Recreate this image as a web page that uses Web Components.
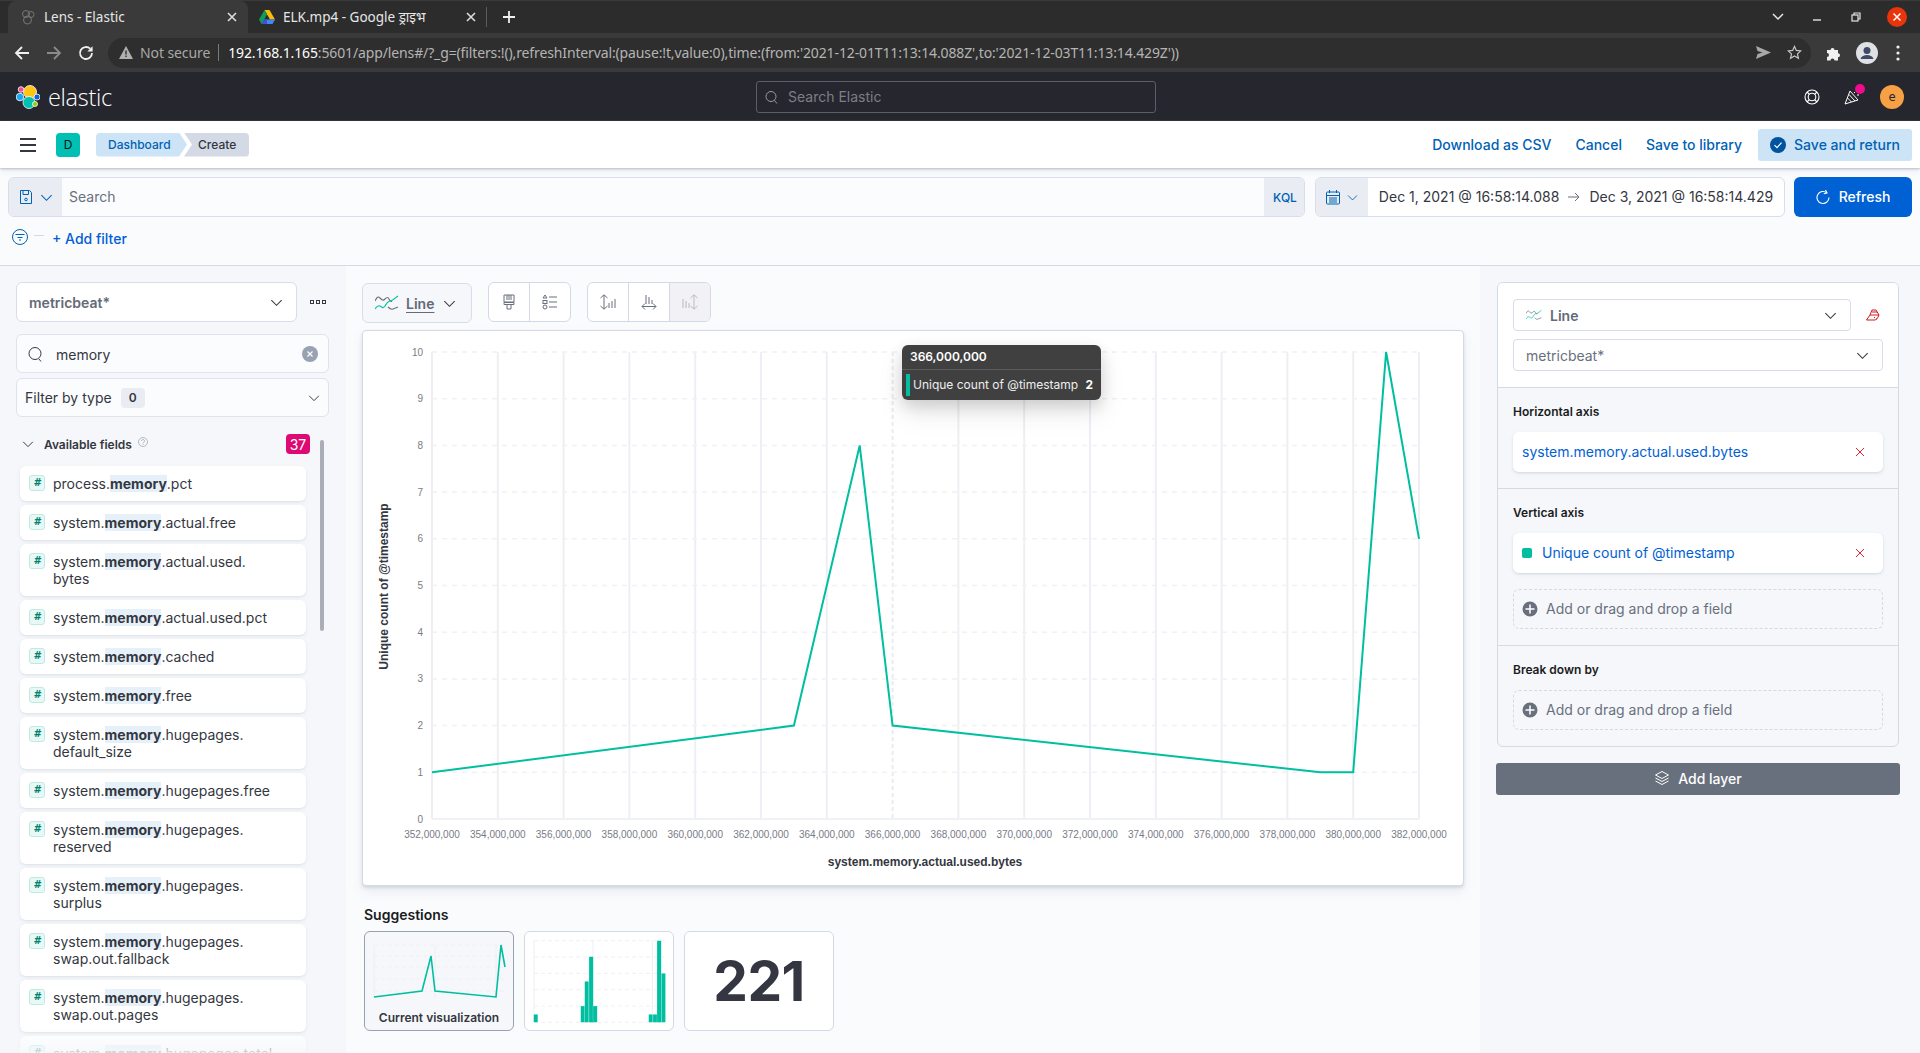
<!DOCTYPE html>
<html lang="en"><head><meta charset="utf-8"><title>Lens - Elastic</title>
<style>
html,body{margin:0;padding:0;height:1053px;overflow:hidden;background:#fafbfd;font-family:Inter,"Liberation Sans",sans-serif;color:#343741}
</style></head><body>
<browser-chrome></browser-chrome>
<kbn-header></kbn-header>
<kbn-appmenu></kbn-appmenu>
<kbn-querybar></kbn-querybar>
<lens-main>
  <field-sidebar slot="left">
    <field-item>process.<b>memory</b>.pct</field-item>
    <field-item>system.<b>memory</b>.actual.free</field-item>
    <field-item>system.<b>memory</b>.actual.used.<br>bytes</field-item>
    <field-item>system.<b>memory</b>.actual.used.pct</field-item>
    <field-item>system.<b>memory</b>.cached</field-item>
    <field-item>system.<b>memory</b>.free</field-item>
    <field-item>system.<b>memory</b>.hugepages.<br>default_size</field-item>
    <field-item>system.<b>memory</b>.hugepages.free</field-item>
    <field-item>system.<b>memory</b>.hugepages.<br>reserved</field-item>
    <field-item>system.<b>memory</b>.hugepages.<br>surplus</field-item>
    <field-item>system.<b>memory</b>.hugepages.<br>swap.out.fallback</field-item>
    <field-item>system.<b>memory</b>.hugepages.<br>swap.out.pages</field-item>
    <field-item>system.<b>memory</b>.hugepages.total</field-item>
  </field-sidebar>
  <lens-workspace slot="center"></lens-workspace>
  <config-panel slot="right"></config-panel>
</lens-main>
<script>
const chev=(c='#343741',s=16)=>`<svg width="${s}" height="${s}" viewBox="0 0 16 16" fill="none" stroke="${c}" stroke-width="1.1"><path d="M2.5 5.5L8 11l5.5-5.5"/></svg>`;
const lineIcon=(w=24,h=16)=>`<svg width="${w}" height="${h}" viewBox="0 0 24 16" fill="none" stroke-width="1.1"><path d="M0 6C2 2 3 1 5 3s3 3 5 1 3-2 4 0 2 3 3 2" stroke="#69707d"/><path d="M0 14c2-3 3-4 5-3s3 3 5 0 3-5 5-5 3-1 8-5" stroke="#00bfa0"/><path d="M13 12c2 2 3 3 5 2s3-1 5-2" stroke="#69707d"/></svg>`;
class Base extends HTMLElement{
  constructor(){super();this.attachShadow({mode:'open'}).innerHTML=this.tpl();}
}
class BrowserChrome extends Base{tpl(){return `<style>
:host{display:block;height:72px;background:#3a3a3a;font-family:"Noto Sans","Liberation Sans","Noto Sans CJK SC",sans-serif;color:#e6e6e6;font-size:13.5px}
.strip{height:33px;background:#2c2c2c;display:flex;align-items:stretch;padding-left:8px;position:relative;border-top:1px solid #3a3a3a;box-sizing:border-box}
.tab{display:flex;align-items:center;box-sizing:border-box;height:32px;border-radius:8px 8px 0 0}
.t1{width:240px;background:#3a3a3a;padding:0 0 0 12px}
.t2{width:238px;padding:0 0 0 11px}
.tt{flex:1;padding-left:8px;white-space:nowrap;overflow:hidden}
.x{width:10px;height:10px;margin-right:11px;flex:none}
.t2 .x{margin-right:10px}
.sep{width:1px;height:20px;background:#5a5a5a;align-self:center;margin:0}
.plus{margin-left:15px;align-self:center;display:flex}
.wins{margin-left:auto;display:flex;align-items:center;height:32px;padding-right:13px}
.wins>*{flex:none}
.tool{height:39px;display:flex;align-items:center;box-sizing:border-box;padding:0 0 0 14px}
.nav{display:flex;width:94px;gap:16px}
.pill{width:1703px;height:30px;border-radius:15px;background:#2e2e2e;display:flex;align-items:center;box-sizing:border-box;padding:0 9px 0 11px;flex:none;font-size:14px}
.ns{color:#a8a8a8;margin-left:7px;white-space:nowrap;letter-spacing:-.1px}
.d{width:1px;height:17px;background:#7a7a7a;margin:0 9px 0 8px}
.u{color:#b4b4b4;white-space:nowrap;letter-spacing:-.13px}.u b{font-weight:400;color:#fff}
.r{margin-left:auto;display:flex;gap:16px;align-items:center}
.ext{display:flex;align-items:center;gap:14px;padding-left:15px}
</style>
<div class="strip">
 <div class="tab t1"><svg width="16" height="16" viewBox="0 0 16 16" fill="none" stroke="#777" stroke-width="1"><circle cx="6" cy="5" r="3.5"/><circle cx="11" cy="5.5" r="3"/><circle cx="7.5" cy="11" r="4"/></svg><span class="tt">Lens - Elastic</span>
 <svg class="x" viewBox="0 0 10 10" stroke="#ddd" stroke-width="1.6"><path d="M1 1l8 8M9 1l-8 8"/></svg></div>
 <div class="tab t2" ><svg width="16" height="14" viewBox="0 0 16 14"><path d="M5.5 0h5L16 9.5h-5z" fill="#fbbc04"/><path d="M5.5 0L0 9.500 2.600 14 8 4.500z" fill="#0f9d58"/><path d="M2.600 14H13.500L16 9.500H5.200z" fill="#4285f4"/><path d="M2.600 14H8V9.500H5.200z" fill="#3f51d5"/></svg><span class="tt">ELK.mp4 - Google ड्राइभ</span>
 <svg class="x" viewBox="0 0 10 10" stroke="#ddd" stroke-width="1.6"><path d="M1 1l8 8M9 1l-8 8"/></svg></div>
 <div class="sep"></div>
 <div class="plus"><svg width="14" height="14" viewBox="0 0 14 14" stroke="#f0f0f0" stroke-width="1.8"><path d="M7 1v12M1 7h12"/></svg></div>
 <div class="wins">
  <svg width="12" height="8" viewBox="0 0 12 8" fill="none" stroke="#e6e6e6" stroke-width="1.5"><path d="M1 1l5 5 5-5"/></svg>
  <svg style="margin-left:28px" width="10" height="10" viewBox="0 0 10 10" stroke="#e6e6e6" stroke-width="1.4"><path d="M1 8h8"/></svg>
  <svg style="margin-left:29px" width="10" height="10" viewBox="0 0 10 10" fill="none" stroke="#e6e6e6" stroke-width="1.2"><rect x="1" y="3" width="6" height="6"/><path d="M3 3V1h6v6H7"/></svg>
  <svg style="margin-left:26px" width="20" height="20" viewBox="0 0 20 20"><circle cx="10" cy="10" r="10" fill="#e8350c"/><path d="M6.500 6.500l7 7M13.500 6.500l-7 7" stroke="#fff" stroke-width="1.500"/></svg>
 </div>
</div>
<div class="tool">
 <div class="nav">
  <svg width="16" height="16" viewBox="0 0 16 16" fill="none" stroke="#f0f0f0" stroke-width="1.8"><path d="M15 8H2M8 2L2 8l6 6"/></svg>
  <svg width="16" height="16" viewBox="0 0 16 16" fill="none" stroke="#8a8a8a" stroke-width="1.8"><path d="M1 8h13M8 2l6 6-6 6"/></svg>
  <svg width="16" height="16" viewBox="0 0 16 16" fill="none" stroke="#f0f0f0" stroke-width="1.800"><path d="M14 8a6 6 0 1 1-1.800-4.300"/><path d="M14.600 1.200v5.300H9.300z" fill="#f0f0f0" stroke="none"/></svg>
 </div>
 <div class="pill">
  <svg width="14" height="13" viewBox="0 0 14 13"><path d="M7 0l7 13H0z" fill="#b0b0b0"/><path d="M6.300 4.500h1.400v4H6.300zM6.300 9.500h1.400v1.400H6.300z" fill="#2e2e2e"/></svg>
  <span class="ns">Not secure</span><span class="d"></span>
  <span class="u"><b>192.168.1.165</b>:5601/app/lens#/?_g=(filters:!(),refreshInterval:(pause:!t,value:0),time:(from:'2021-12-01T11:13:14.088Z',to:'2021-12-03T11:13:14.429Z'))</span>
  <div class="r">
   <svg width="15" height="13" viewBox="0 0 15 13"><path d="M0 0l15 6.500L0 13l1.500-5 5-1.500-5-1.500z" fill="#a8a8a8"/></svg>
   <svg width="15" height="15" viewBox="0 0 16 16" fill="none" stroke="#c8c8c8" stroke-width="1.300"><path d="M8 1.500l2 4.300 4.700.5-3.500 3.200 1 4.600L8 11.800l-4.200 2.300 1-4.600L1.300 6.300 6 5.800z"/></svg>
  </div>
 </div>
 <div class="ext">
  <svg width="16" height="16" viewBox="0 0 16 16"><path d="M1 5h3.500a2 2 0 1 1 4 0H12v3.200a2 2 0 1 1 0 4V15.500H8.500a2 2 0 1 0-4 0H1v-3.500a2 2 0 1 0 0-4z" fill="#f0f0f0"/></svg>
  <svg width="22" height="22" viewBox="0 0 22 22"><circle cx="11" cy="11" r="11" fill="#dfe1e5"/><circle cx="11" cy="8.500" r="3.500" fill="#3c4a66"/><path d="M4.500 17c1-3 3.500-4 6.500-4s5.500 1 6.500 4z" fill="#3c4a66"/></svg>
  <svg width="4" height="16" viewBox="0 0 4 16" fill="#f0f0f0" style="margin-left:-2px;padding-left:6px"><circle cx="2" cy="2" r="1.600"/><circle cx="2" cy="8" r="1.600"/><circle cx="2" cy="14" r="1.600"/></svg>
 </div>
</div>`}}
class KbnHeader extends Base{tpl(){return `<style>
:host{display:flex;height:49px;background:#25262e;align-items:center;position:relative;box-sizing:border-box;padding:0 16px 0 16px}
.logo{display:flex;align-items:center;gap:8px;width:740px;color:#fff;font-size:23.5px;letter-spacing:-.3px;font-weight:300;font-family:"Open Sans",Inter,sans-serif}
.s{width:400px;height:32px;box-sizing:border-box;border:1px solid #5c5d66;border-radius:3px;display:flex;align-items:center;padding-left:7px;gap:8px;color:#7d7e86;font-size:14px}
.r{margin-left:auto;display:flex;align-items:center;position:relative}
.dot{position:absolute;left:51px;top:-1px;width:10px;height:10px;background:#f00c8c;border-radius:50%}
.a{width:24px;height:24px;border-radius:50%;background:#f7a144;color:#25262e;font-size:12px;display:flex;align-items:center;justify-content:center;margin-left:20px;font-family:"DejaVu Sans Mono",monospace}
</style>
<div class="logo"><svg width="24" height="24" viewBox="0 0 24 24"><circle cx="14" cy="7" r="6.500" fill="#fec514" stroke="#fff" stroke-width=".8"/><circle cx="13" cy="17.500" r="6" fill="#00bfb3" stroke="#fff" stroke-width=".8"/><circle cx="5" cy="4.500" r="2.800" fill="#f04e98" stroke="#fff" stroke-width=".8"/><circle cx="4" cy="12" r="3.800" fill="#1ba9f5" stroke="#fff" stroke-width=".8"/><circle cx="21" cy="12" r="3" fill="#0b64dd" stroke="#fff" stroke-width=".8"/><circle cx="19" cy="19" r="2.500" fill="#93c90e" stroke="#fff" stroke-width=".8"/></svg><span>elastic</span></div>
<div class="s"><svg width="16" height="16" viewBox="0 0 16 16" fill="none" stroke="#9a9ba3"><circle cx="7" cy="7.500" r="5"/><path d="M10.500 11.500l2.500 3"/></svg><span>Search Elastic</span></div>
<div class="r"><svg width="16" height="16" viewBox="0 0 16 16" fill="none" stroke="#fff" stroke-width="1.100"><circle cx="8" cy="8" r="7"/><circle cx="8" cy="8" r="3.800"/><path d="M3 3l2.500 2.500M13 3l-2.500 2.500M3 13l2.500-2.500M13 13l-2.500-2.500"/></svg>
<svg style="margin-left:24px" width="16" height="16" viewBox="0 0 16 16" fill="none" stroke="#fff" stroke-width="1"><path d="M1 15L6 2l8 9zM3.500 9l4 4M5 5.500l6 6.500"/><path d="M10 3l1 1M13 6h2"/></svg><span class="dot"></span>
<div class="a">e</div></div>`}}
class KbnAppmenu extends Base{tpl(){return `<style>
:host{display:flex;height:47px;background:#fff;align-items:center;box-sizing:border-box;padding:0 8px 0 20px;position:relative;z-index:2;box-shadow:0 1px 2px #b6bccb,0 3px 6px rgba(152,162,179,.18);font-size:14px}
.d{width:24px;height:24px;background:#00bfb3;border-radius:4px;margin-left:20px;font-size:12px;display:flex;align-items:center;justify-content:center;color:#111}
.bc{display:flex;margin-left:16px;height:24px;border-radius:4px;overflow:hidden;font-size:12px;font-weight:500;line-height:24px;width:153px}
.b1{background:#cce4f5;color:#0061b5;padding:0 18px 0 12px;clip-path:polygon(0 0,calc(100% - 8px) 0,100% 50%,calc(100% - 8px) 100%,0 100%);width:61px}
.b2{background:#d3dae6;color:#343741;padding:0 12px 0 14px;margin-left:-3px;clip-path:polygon(0 0,100% 0,100% 100%,0 100%,8px 50%);flex:1}
.r{margin-left:auto;display:flex;align-items:center;color:#0061b5;font-weight:500}
.r a{margin-right:24px}.r a:nth-child(3){margin-right:16px}
.sv{background:#cce4f5;height:32px;width:154px;border-radius:3px;display:flex;align-items:center;justify-content:center;gap:8px}
</style>
<svg width="16" height="14" viewBox="0 0 16 14" fill="#343741"><rect y="0" width="16" height="2"/><rect y="6" width="16" height="2"/><rect y="12" width="16" height="2"/></svg>
<div class="d">D</div>
<div class="bc"><div class="b1">Dashboard</div><div class="b2">Create</div></div>
<div class="r"><a>Download as CSV</a><a>Cancel</a><a>Save to library</a>
<div class="sv"><svg width="16" height="16" viewBox="0 0 16 16"><circle cx="8" cy="8" r="8" fill="#00539e"/><path d="M4.500 8.200l2.500 2.500 4.500-5" fill="none" stroke="#fff" stroke-width="1.200"/></svg><span>Save and return</span></div></div>`}}
class KbnQuerybar extends Base{tpl(){return `<style>
:host{display:block;height:98px;box-sizing:border-box;background:#fafbfd;border-bottom:1px solid #d3dae6;padding:9px 8px 0;font-size:14px}
.row{display:flex;height:40px}
.grp{display:flex;border:1px solid #d9dcea;border-radius:6px;overflow:hidden;box-sizing:border-box}
.q{flex:none;width:1297px;background:#fbfcfd}
.pre{background:#e9edf3;display:flex;align-items:center;gap:5px;padding-left:9px;width:53px;box-sizing:border-box;flex:none}
.in{flex:1;display:flex;align-items:center;padding:0 0 1px 7px;color:#69707d}
.kql{width:40px;background:#e9edf3;flex:none;color:#0061b5;font-size:12px;font-weight:500;display:flex;align-items:center;justify-content:center;padding-left:2px;box-sizing:border-box}
.date{margin-left:10px;width:470px;background:#fff;flex:none}
.date .pre{width:52px}
.t{flex:1;display:flex;align-items:center;justify-content:center;gap:9px;color:#343741;white-space:nowrap;padding-bottom:1px}
.ref{margin-left:9px;flex:1;background:#0061d5;border-radius:6px;color:#fff;font-weight:500;display:flex;align-items:center;justify-content:center;gap:9px;padding-bottom:1px;box-sizing:border-box}
.f{display:flex;align-items:center;height:36px;padding:7px 0 0 4px;box-sizing:border-box}
.f svg{margin-top:-4px}
.dash{width:10px;height:1px;background:#d3dae6;margin:-6px 9px 0 6px}
.add{color:#0061d5;font-weight:500;margin-left:-1px}
</style>
<div class="row">
 <div class="grp q"><div class="pre"><svg width="16" height="16" viewBox="0 0 16 16" fill="none" stroke="#0061b5"><path d="M2.500 1.500h9l2 2v11h-11z"/><path d="M5 1.500v4h5.500v-4"/><circle cx="8" cy="10.500" r="1.300"/></svg>${chev('#0061b5',15)}</div>
  <div class="in">Search</div><div class="kql">KQL</div></div>
 <div class="grp date"><div class="pre"><svg width="16" height="16" viewBox="0 0 16 16" fill="none" stroke="#0061b5"><rect x="1.500" y="3" width="13" height="12" rx="1"/><path d="M1.500 6.500h13M4.500 1v3M11.500 1v3M4 9h8M4 11h8M4 13h8" /></svg>${chev('#0061b5',13)}</div>
  <div class="t"><span>Dec 1, 2021 @ 16:58:14.088</span><svg width="12" height="10" viewBox="0 0 12 10" fill="none" stroke="#69707d"><path d="M0 5h11M7 1l4 4-4 4"/></svg><span>Dec 3, 2021 @ 16:58:14.429</span></div></div>
 <div class="ref"><svg width="14" height="16" viewBox="0 0 14 16" fill="none" stroke="#fff" stroke-width="1.100"><path d="M11 4a6 6 0 1 0 2 4.500"/><path d="M9.500 1l1.500 3-3.200.8"/></svg><span>Refresh</span></div>
</div>
<div class="f"><svg width="16" height="16" viewBox="0 0 16 16" fill="none" stroke="#0061b5"><circle cx="8" cy="8" r="7.500"/><path d="M3.500 5.500h9M5.500 8.500h5M7 11h2"/></svg><span class="dash"></span><span class="add">+ Add filter</span></div>`}}
class LensMain extends Base{tpl(){return `<style>
:host{display:grid;grid-template-columns:346px 1134px 440px;height:787px;overflow:hidden}
::slotted(*){min-width:0}
</style><slot name="left"></slot><slot name="center"></slot><slot name="right"></slot>`}}
class FieldSidebar extends Base{tpl(){return `<style>
:host{display:block;background:#f5f7fa;height:787px;overflow:hidden;position:relative;box-sizing:border-box;padding:16px 0 0 16px;font-size:14px}
.top{display:flex;align-items:center;height:40px}
.sel{width:281px;height:40px;box-sizing:border-box;background:#fff;border:1px solid #d9dcea;border-radius:6px;display:flex;align-items:center;justify-content:space-between;padding:0 12px;font-weight:600;color:#646a77}
.dots{display:flex;gap:2px;margin-left:13px}.dots i{display:block;width:4px;height:4px;border:1px solid #343741;box-sizing:border-box}
.box{width:313px;height:40px;box-sizing:border-box;background:#fbfcfd;border:1px solid #e0e3ee;border-radius:6px;display:flex;align-items:center}
.s{margin-top:12px;padding:0 10px 0 11px;color:#343741;height:39px}
.s span{margin-left:12px;flex:1;margin-top:1px}
.ft{margin-top:5px;padding:0 7px 0 8px;justify-content:space-between;height:39px}
.ft div{display:flex;align-items:center;gap:9px}
.n{background:#e9edf3;border-radius:4px;width:24px;height:20px;display:flex;align-items:center;justify-content:center;font-size:12px;font-weight:600}
.h{display:flex;align-items:center;height:20px;margin:17px 0 12px 0;padding-left:5px;font-size:12px;font-weight:600;width:294px;box-sizing:border-box}
.h .l{margin-left:9px}.h svg.q{margin-left:6px;margin-top:-4px}
.b{margin-left:auto;background:#dd0a73;color:#fff;width:24px;height:20px;border-radius:4px;font-size:14px;font-weight:400;display:flex;align-items:center;justify-content:center}
.list{display:flex;flex-direction:column;gap:4px;width:286px;margin-left:4px}
.bar{position:absolute;left:320px;top:174px;width:4px;height:191px;background:#aaaeb7;border-radius:2px}
.fade{position:absolute;left:0;right:0;bottom:0;height:24px;background:linear-gradient(rgba(245,247,250,0),rgba(245,247,250,.85))}
</style>
<div class="top"><div class="sel"><span>metricbeat*</span>${chev('#343741',15)}</div><div class="dots"><i></i><i></i><i></i></div></div>
<div class="box s"><svg width="16" height="16" viewBox="0 0 16 16" fill="none" stroke="#343741"><circle cx="7" cy="7.500" r="6"/><path d="M11 13l2 2.500"/></svg><span>memory</span><svg width="16" height="16" viewBox="0 0 16 16"><circle cx="8" cy="8" r="8" fill="#98a2b3"/><path d="M5.500 5.500l5 5M10.500 5.500l-5 5" stroke="#fff" stroke-width="1.200"/></svg></div>
<div class="box ft"><div><span>Filter by type</span><span class="n">0</span></div>${chev('#343741',14)}</div>
<div class="h">${chev('#343741',14)}<span class="l">Available fields</span><svg class="q" width="10" height="10" viewBox="0 0 10 10" fill="none" stroke="#98a2b3" stroke-width=".7"><circle cx="5" cy="5" r="4.500"/><path d="M3.500 4a1.500 1.500 0 1 1 2 1.400c-.4.200-.5.500-.5 1M5 7.200v.8"/></svg><span class="b">37</span></div>
<div class="list"><slot></slot></div>
<div class="bar"></div><div class="fade"></div>`}}
class FieldItem extends Base{tpl(){return `<style>
:host{display:flex;background:#fff;border-radius:6px;box-shadow:0 1px 2px rgba(152,162,179,.18),0 2px 4px rgba(152,162,179,.08);padding:9px 8px 9px 9px;font-size:14px;line-height:17px;color:#343741;box-sizing:border-box;flex:none}
.t{width:16px;height:16px;box-sizing:border-box;border:1px solid #bfe9e1;background:#e6f9f6;border-radius:3px;color:#00806e;font:italic 700 10px/14px "DejaVu Sans","Liberation Sans",sans-serif;text-align:center;flex:none;margin-right:8px}
::slotted(b){font-weight:700;background:#e6f0f9}
</style><span class="t">#</span><span><slot></slot></span>`}}
class LensChart extends Base{tpl(){
 const L=432,S=65.8,B=819,H=46.7;let g='';
 for(let i=0;i<=15;i++){const x=L+i*S;
  g+=i==7?`<path d="M${x} 352V819" stroke="#e9ebf1" stroke-width="2" stroke-dasharray="4 3"/>`:`<path d="M${x} 352V819" stroke="#eeeff4" stroke-width="2"/>`;
  g+=`<text x="${x}" y="837.500" text-anchor="middle" class="tk">${(352+2*i)},000,000</text>`;}
 for(let i=0;i<=10;i++){const y=B-i*H;
  g+=`<path d="M432 ${y}H1419" stroke="#f0f1f4" stroke-width="${i?1.500:2}" ${i?'stroke-dasharray="5 5"':''}/>`;
  g+=`<text x="423" y="${y+3.500}" text-anchor="end" class="tk">${i}</text>`;}
 const pts=[[0,1],[5.5,2],[6.5,8],[7,2],[13.5,1],[14,1],[14.5,10],[15,6]].map(p=>`${L+p[0]*S},${B-p[1]*H}`).join(' ');
 return `<style>
:host{display:block;height:556px;width:1102px;box-sizing:border-box;position:relative;background:#fff;border:1px solid #d3dae6;border-radius:4px;box-shadow:0 2px 3px rgba(152,162,179,.3),0 6px 12px rgba(152,162,179,.16);font-family:"Liberation Sans",sans-serif}
svg{display:block}
.tk{font:10px "Liberation Sans",sans-serif;fill:#777c86}
.ti{font:700 12px "Liberation Sans",sans-serif;fill:#343741}
.tip{position:absolute;left:539px;top:14px;width:199px;height:55px;box-sizing:border-box;background:#404040;border-radius:6px;color:#fff;font:12px Inter,sans-serif;box-shadow:0 6px 16px rgba(0,0,0,.15),0 14px 28px rgba(0,0,0,.08)}
.th{height:24px;line-height:24px;padding-left:8px;font-weight:600;border-bottom:1px solid #5c5c5c}
.tr{display:flex;align-items:center;height:30px;padding:0 8px 0 4px;color:#eee}
.tr span,.tr b{margin-top:-2px}
.tr i{width:4px;height:22px;background:#00bfa0;margin-right:3px}
.tr b{margin-left:auto;color:#fff;font-weight:700}
</style>
<svg width="1100" height="554"><g transform="translate(-363,-331)">${g}
<polyline points="${pts}" fill="none" stroke="#00bfa0" stroke-width="2"/>
<text class="ti" transform="translate(388,586.500) rotate(-90)" text-anchor="middle">Unique count of @timestamp</text>
<text class="ti" x="925" y="866" text-anchor="middle">system.memory.actual.used.bytes</text></g></svg>
<div class="tip"><div class="th">366,000,000</div><div class="tr"><i></i><span>Unique count of @timestamp</span><b>2</b></div></div>`}}
class SugCard extends Base{tpl(){return `<style>
:host{display:block;width:150px;height:100px;box-sizing:border-box;background:#fff;border:1px solid #d3dae6;border-radius:6px;overflow:hidden}
:host([selected]){background:#f5f7fa;border-color:#98a2b3}
</style><slot></slot>`}}
class LensWorkspace extends Base{tpl(){
 const bars=[[549,371],[690,346],[702,272],[715,198],[727,346],[894,371],[907,371],[919,150],[932,248]];
 const mx=v=>((v-523)/3).toFixed(1),my=v=>((v-124)/3).toFixed(1);
 let g2='';for(const y of [150,199,248,297,346,395])g2+=`<path d="M${mx(550)} ${my(y)}H${mx(945)}" stroke="#f0f1f4" stroke-dasharray="4 3"/>`;
 for(const x of [550,727,905])g2+=`<path d="M${mx(x)} ${my(150)}V${my(395)}" stroke="#eeeff4"/>`;
 for(const b of bars)g2+=`<rect x="${mx(b[0])}" y="${my(b[1])}" width="4.200" height="${((395-b[1])/3).toFixed(1)}" fill="#00bfa0" stroke="#fff" stroke-width=".2"/>`;
 let g1='';for(const y of [13,24,35,47,59])g1+=`<path d="M9 ${y}H140" stroke="#eef0f4" stroke-dasharray="4 3"/>`;
 for(const x of [9,70,131])g1+=`<path d="M${x} 13V66" stroke="#eceef3"/>`;
 return `<style>
:host{display:block;background:#fafbfd;height:787px;box-sizing:border-box;padding:16px 16px 0;font-size:14px;overflow:hidden}
.tb{display:flex;height:40px;align-items:flex-start}
.line{width:110px;height:40px;box-sizing:border-box;margin-top:1px;background:#f5f7fa;border:1px solid #d9dcea;border-radius:6px;display:flex;align-items:center;padding-left:12px;gap:8px;font-weight:600;color:#646a77}
.line u{text-underline-offset:3px;margin-left:-1px}
.g{display:flex;height:40px;box-sizing:border-box;border:1px solid #d3dae6;border-radius:6px;background:#fff;overflow:hidden;margin-left:16px}
.g div{width:40px;display:flex;align-items:center;justify-content:center;border-left:1px solid #d3dae6}
.g div:first-child{border-left:0}
.g .dis{background:#f1f1f6}
lens-chart{margin-top:8px}
h4{font-size:14px;font-weight:600;margin:0;line-height:17px;padding:20px 0 8px 2px;color:#1a1c21}
.c{display:flex;gap:10px;padding-left:2px}
.cap{font-size:12px;font-weight:600;text-align:center;line-height:14px;margin-top:-3px;color:#343741}
.num{height:98px;display:flex;align-items:center;justify-content:center;font-size:55px;font-weight:700;color:#343741;letter-spacing:-.5px}
svg{display:block}
</style>
<div class="tb">
 <div class="line">${lineIcon()}<u>Line</u>${chev('#343741',15)}</div>
 <div class="g">
  <div><svg width="16" height="16" viewBox="0 0 16 16" fill="none" stroke="#69707d"><path d="M3 1h10v7H3zM3 8.500h10v2H3zM6 10.500h4V15H6zM6 1v5M8 1v5M10 1v5"/></svg></div>
  <div><svg width="16" height="16" viewBox="0 0 16 16" fill="none" stroke="#69707d"><path d="M3 1l2 3H1zM7 3h8M7 8h8M7 13h8"/><rect x="1" y="6.500" width="4" height="3"/><circle cx="3" cy="13" r="2"/></svg></div>
 </div>
 <div class="g">
  <div><svg width="16" height="16" viewBox="0 0 16 16" fill="none" stroke="#69707d"><path d="M4 1v14M.5 4L4 .8 7.500 4M.5 12L4 15.200 7.500 12M9 9v5M12 7v7M15 5v9"/></svg></div>
  <div><svg width="16" height="16" viewBox="0 0 16 16" fill="none" stroke="#69707d"><path d="M1 12.500h14M4 9.500l-3 3 3 3M12 9.500l3 3-3 3M5 1v9M8 3v7M11 6v4"/></svg></div>
  <div class="dis"><svg width="16" height="16" viewBox="0 0 16 16" fill="none" stroke="#b8bbc4"><path d="M12 1v14M8.500 4L12 .8 15.500 4M8.500 12l3.500 3.200 3.500-3.200M1 5v9M4 7v7M7 9v5"/></svg></div>
 </div>
</div>
<lens-chart></lens-chart>
<h4>Suggestions</h4>
<div class="c">
 <sug-card selected><svg width="148" height="82" viewBox="0 0 148 82">${g1}<polyline points="9,65 57,59 66,24 70,59 131,65 136,13 140,35" fill="none" stroke="#00bfa0" stroke-width="1.600"/></svg><div class="cap">Current visualization</div></sug-card>
 <sug-card><svg width="148" height="98" viewBox="0 0 148 98">${g2}</svg></sug-card>
 <sug-card><div class="num">221</div></sug-card>
</div>`}}
class DimBox extends Base{tpl(){return `<style>
:host{display:flex;align-items:center;height:40px;box-sizing:border-box;background:#fff;border-radius:6px;box-shadow:0 1px 2px rgba(152,162,179,.25),0 2px 4px rgba(152,162,179,.12);padding:0 15px 2px 9px;color:#0061d5;font-size:14px}
.sq{width:10px;height:10px;border-radius:2px;background:#00bfa0;margin:2px 10px 0 0;display:none}
:host([dot]) .sq{display:block}
svg{margin-left:auto;margin-top:1px}
</style><span class="sq"></span><slot></slot><svg width="16" height="16" viewBox="0 0 16 16" stroke="#e7222a"><path d="M4 4l8 8M12 4l-8 8"/></svg>`}}
class DropBox extends Base{tpl(){return `<style>
:host{display:flex;align-items:center;height:40px;box-sizing:border-box;border:1px dashed #d3dae6;border-radius:6px;padding-left:8px;gap:8px;color:#69707d;font-size:14px}
span{margin-top:-2px}
</style><svg width="16" height="16" viewBox="0 0 16 16"><circle cx="8" cy="8" r="7.500" fill="#69707d"/><path d="M8 3.500v9M3.500 8h9" stroke="#fff" stroke-width="1.500"/></svg><span>Add or drag and drop a field</span>`}}
class ConfigPanel extends Base{tpl(){return `<style>
:host{display:block;background:#f5f7fa;height:787px;box-sizing:border-box;padding:16px 20px 0 16px;font-size:14px}
.p{margin-left:1px;width:402px;box-sizing:border-box;border:1px solid #d3dae6;border-radius:6px;overflow:hidden;background:#f5f7fa}
.top{background:#fff;padding:16px 15px;border-bottom:1px solid #d3dae6}
.sel{height:32px;box-sizing:border-box;border:1px solid #d9dcea;border-radius:4px;display:flex;align-items:center;padding:0 12px;justify-content:space-between;background:#fff}
.r1{display:flex;align-items:center;gap:14px}.r1 .sel{width:338px;font-weight:600;color:#646a77;padding-left:12px}
.sel .l{display:flex;align-items:center;gap:8px}
.m{margin-top:8px;width:370px;color:#69707d}
.sec{padding:16px 15px;border-bottom:1px solid #d3dae6}.sec:last-child{border-bottom:0}
label{display:block;font-size:12px;font-weight:600;line-height:16px;margin-bottom:12px;color:#1a1c21}
drop-box{margin-top:16px}
.add{margin-top:16px;height:32px;width:404px;margin-left:0;background:#69707d;color:#fff;border-radius:3px;display:flex;align-items:center;justify-content:center;gap:8px;font-weight:500;padding-bottom:2px;box-sizing:border-box}
</style>
<div class="p">
 <div class="top">
  <div class="r1"><div class="sel"><span class="l">${lineIcon(16,12)}<span>Line</span></span>${chev('#343741',15)}</div>
  <svg width="16" height="16" viewBox="0 0 16 16" fill="none" stroke="#cc1a1a" stroke-width="1"><path d="M1.500 13l3.500-5h9l-1.500 3-2 2z"/><path d="M5 8l2-5h4l3 5M7 5h5"/><path d="M9 10.500h1M11 12h1" stroke-width="1.200"/></svg></div>
  <div class="sel m"><span>metricbeat*</span>${chev('#343741',15)}</div>
 </div>
 <div class="sec"><label>Horizontal axis</label><dim-box>system.memory.actual.used.bytes</dim-box></div>
 <div class="sec"><label>Vertical axis</label><dim-box dot>Unique count of @timestamp</dim-box><drop-box></drop-box></div>
 <div class="sec"><label>Break down by</label><drop-box style="margin-top:0"></drop-box></div>
</div>
<div class="add"><svg width="16" height="16" viewBox="0 0 16 16" fill="none" stroke="#fff"><path d="M8 1.500L14.500 5 8 8.500 1.500 5zM1.500 8L8 11.500 14.500 8M1.500 11L8 14.500 14.500 11"/></svg><span>Add layer</span></div>`}}
const defs={'browser-chrome':BrowserChrome,'kbn-header':KbnHeader,'kbn-appmenu':KbnAppmenu,'kbn-querybar':KbnQuerybar,'lens-main':LensMain,'field-sidebar':FieldSidebar,'field-item':FieldItem,'lens-chart':LensChart,'sug-card':SugCard,'lens-workspace':LensWorkspace,'dim-box':DimBox,'drop-box':DropBox,'config-panel':ConfigPanel};
for(const k in defs)customElements.define(k,defs[k]);
</script>
</body></html>
